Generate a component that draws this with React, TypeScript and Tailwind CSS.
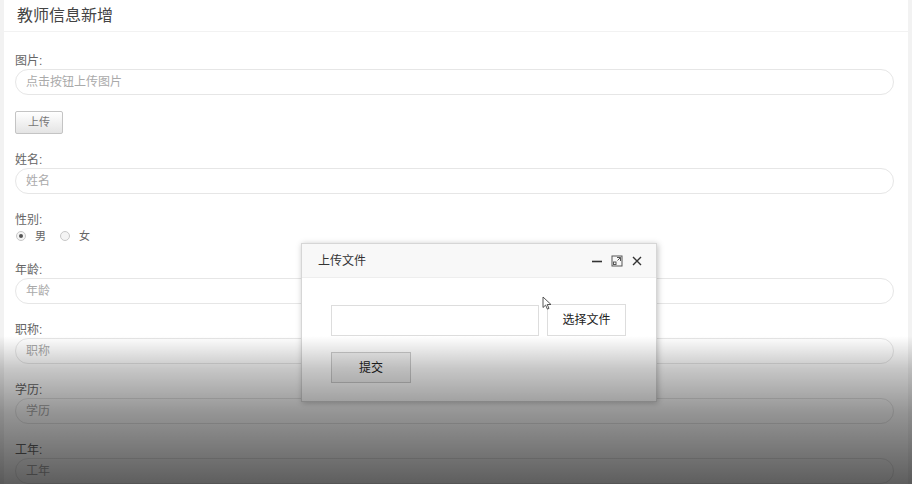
import React from 'react';

const font = { fontFamily: '"Liberation Sans", "Noto Sans CJK SC", sans-serif' };

// 表单的一行：标签 + 圆角输入框
function Field({ label, placeholder }: { label: string; placeholder: string }) {
    return (
        <div className="mb-[16px]">
            <div className="h-[18px] pt-[1px] text-[12px] leading-[18px] text-[#666]">{label}</div>
            <div className="flex h-[26px] items-center rounded-full border border-[#e6e6e6] bg-white pl-[10px] text-[12px] text-[#aaa]">
                {placeholder}
            </div>
        </div>
    );
}

function Radio({ checked, label }: { checked?: boolean; label: string }) {
    return (
        <span className="mr-[13px] inline-flex items-center">
            <span className="mr-[9px] ml-[1px] inline-flex h-[10px] w-[10px] items-center justify-center rounded-full border border-[#c8c8c8] bg-[#f4f4f4]">
                {checked && <span className="h-[4px] w-[4px] rounded-full bg-[#555]" />}
            </span>
            <span className="text-[11px] text-[#666]">{label}</span>
        </span>
    );
}

function UploadDialog() {
    return (
        <div className="absolute top-[243px] left-[301px] w-[356px] border border-[#d6d6d6] bg-white shadow-[1px_1px_6px_rgba(0,0,0,0.25)]">
            <div className="flex h-[34px] items-center justify-between border-b border-[#eeeeee] bg-[#f8f8f8] pr-[13px] pl-[16px]">
                <span className="text-[12px] text-[#333]">上传文件</span>
                <div className="flex items-center gap-[8px] text-[#333]">
                    <svg width="12" height="12" viewBox="0 0 12 12">
                        <path d="M1 6.5h10" stroke="#333" strokeWidth="1.6" />
                    </svg>
                    <svg width="12" height="12" viewBox="0 0 12 12" fill="none" stroke="#555" strokeWidth="1">
                        <rect x="1" y="1" width="10" height="10" />
                        <path d="M6 2.5h3.5v3.5M9.5 2.5 6.5 5.5" />
                        <rect x="2.5" y="7" width="2.5" height="2.5" />
                    </svg>
                    <svg width="12" height="12" viewBox="0 0 12 12">
                        <path d="M2 2l8 8M10 2l-8 8" stroke="#333" strokeWidth="1.4" />
                    </svg>
                </div>
            </div>
            <div className="px-[29px] pt-[26px] pb-[18px]">
                <div className="flex items-center">
                    <div className="h-[31px] w-[208px] border border-[#dddddd] bg-white" />
                    <div className="ml-[8px] flex h-[32px] w-[79px] items-center justify-center border border-[#dddddd] bg-white text-[12px] text-[#222]">
                        选择文件
                    </div>
                </div>
                <div className="mt-[16px] flex h-[31px] w-[80px] items-center justify-center border border-[#cccccc] bg-[#f3f3f3] text-[12px] text-[#222]">
                    提交
                </div>
            </div>
        </div>
    );
}

export default function App() {
    return (
        <div className="relative h-[484px] w-[912px] overflow-hidden bg-[#f2f2f2] px-[4px]" style={font}>
            <div className="h-full bg-white">
                <div className="flex h-[32px] items-center border-b border-[#f2f2f2] pl-[13px] text-[16px] text-[#444]">
                    教师信息新增
                </div>
                <div className="pt-[19px] pr-[14px] pl-[11px]">
                    <Field label="图片:" placeholder="点击按钮上传图片" />
                    <div className="mb-[16px] flex h-[23px] w-[48px] items-center justify-center rounded-[2px] border border-[#c4c4c4] bg-[linear-gradient(#ffffff,#e4e4e4)] text-[11px] text-[#777]">
                        上传
                    </div>
                    <Field label="姓名:" placeholder="姓名" />
                    <div className="mb-[16px]">
                        <div className="h-[18px] pt-[1px] text-[12px] leading-[18px] text-[#666]">性别:</div>
                        <div className="flex h-[16px] items-center">
                            <Radio checked label="男" />
                            <Radio label="女" />
                        </div>
                    </div>
                    <Field label="年龄:" placeholder="年龄" />
                    <Field label="职称:" placeholder="职称" />
                    <Field label="学历:" placeholder="学历" />
                    <Field label="工年:" placeholder="工年" />
                </div>
            </div>

            <UploadDialog />

            {/* 鼠标指针 */}
            <svg className="absolute top-[296px] left-[542px]" width="10" height="14" viewBox="0 0 10 14">
                <path d="M1 1v10.5l2.6-2.4 1.8 4 1.6-.7-1.8-3.9H9z" fill="#fff" stroke="#444" strokeWidth="0.9" strokeLinejoin="round" />
            </svg>

            {/* 视频底部的暗色渐变 */}
            <div className="pointer-events-none absolute right-0 bottom-0 left-0 h-[148px] bg-[linear-gradient(to_bottom,rgba(0,0,0,0)_0%,rgba(0,0,0,0.22)_22%,rgba(0,0,0,0.42)_52%,rgba(0,0,0,0.63)_100%)]" />
        </div>
    );
}
